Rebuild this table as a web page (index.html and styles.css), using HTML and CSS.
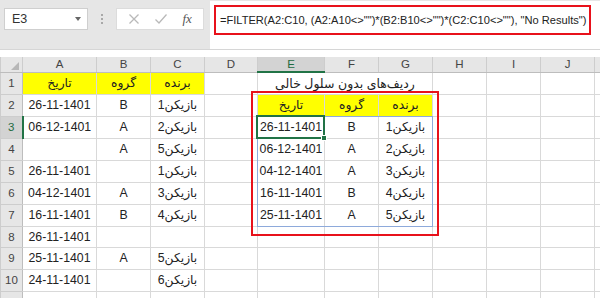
FILE: index.html
```html
<!DOCTYPE html>
<html lang="fa">
<head>
<meta charset="utf-8">
<link rel="stylesheet" href="styles.css">
</head>
<body>
<div class="app">
  <div class="toolbar">
    <div class="namebox"><span class="name">E3</span><span class="caret"></span></div>
    <div class="dots"><i></i><i></i><i></i></div>
    <div class="fbtns">
      <svg class="ic" width="12" height="12" viewBox="0 0 12 12"><path d="M1.5 1.5 L10.5 10.5 M10.5 1.5 L1.5 10.5" stroke="#b9b9b9" stroke-width="1.3" fill="none"/></svg>
      <svg class="ic" width="14" height="12" viewBox="0 0 14 12"><path d="M1.5 6.5 L5 10 L12.5 1.5" stroke="#b9b9b9" stroke-width="1.3" fill="none"/></svg>
      <span class="fx">fx</span>
    </div>
    <div class="formula">
      <div class="fbox">=FILTER(A2:C10, (A2:A10&lt;&gt;"")*(B2:B10&lt;&gt;"")*(C2:C10&lt;&gt;""), "No Results")</div>
    </div>
  </div>
  <div class="gap"></div>
  <div class="sheet">
    <table class="grid">
      <colgroup>
        <col class="w-rn"><col class="w-a"><col class="w-54"><col class="w-54"><col class="w-d"><col class="w-e"><col class="w-54"><col class="w-54"><col class="w-54"><col class="w-54"><col class="w-54"><col class="w-k">
      </colgroup>
      <thead>
        <tr class="hdr">
          <th class="corner"><span class="tri"></span></th>
          <th>A</th><th>B</th><th>C</th><th>D</th><th class="sel">E</th><th>F</th><th>G</th><th>H</th><th>I</th><th>J</th><th></th>
        </tr>
      </thead>
      <tbody>
        <tr><th>1</th><td class="y ar">تاریخ</td><td class="y ar">گروه</td><td class="y ar">برنده</td><td></td><td colspan="3" class="ar title">ردیف‌های بدون سلول خالی</td><td></td><td></td><td></td><td></td></tr>
        <tr><th>2</th><td>26-11-1401</td><td>B</td><td class="ar">بازیکن1</td><td></td><td class="y ar">تاریخ</td><td class="y ar">گروه</td><td class="y ar">برنده</td><td></td><td></td><td></td><td></td></tr>
        <tr><th class="sel">3</th><td>06-12-1401</td><td>A</td><td class="ar">بازیکن2</td><td></td><td>26-11-1401</td><td>B</td><td class="ar">بازیکن1</td><td></td><td></td><td></td><td></td></tr>
        <tr><th>4</th><td></td><td>A</td><td class="ar">بازیکن5</td><td></td><td>06-12-1401</td><td>A</td><td class="ar">بازیکن2</td><td></td><td></td><td></td><td></td></tr>
        <tr><th>5</th><td>26-11-1401</td><td></td><td class="ar">بازیکن1</td><td></td><td>04-12-1401</td><td>A</td><td class="ar">بازیکن3</td><td></td><td></td><td></td><td></td></tr>
        <tr><th>6</th><td>04-12-1401</td><td>A</td><td class="ar">بازیکن3</td><td></td><td>16-11-1401</td><td>B</td><td class="ar">بازیکن4</td><td></td><td></td><td></td><td></td></tr>
        <tr><th>7</th><td>16-11-1401</td><td>B</td><td class="ar">بازیکن4</td><td></td><td>25-11-1401</td><td>A</td><td class="ar">بازیکن5</td><td></td><td></td><td></td><td></td></tr>
        <tr class="r21"><th>8</th><td>26-11-1401</td><td></td><td></td><td></td><td></td><td></td><td></td><td></td><td></td><td></td><td></td></tr>
        <tr><th>9</th><td>25-11-1401</td><td>A</td><td class="ar">بازیکن5</td><td></td><td></td><td></td><td></td><td></td><td></td><td></td><td></td></tr>
        <tr><th>10</th><td>24-11-1401</td><td></td><td class="ar">بازیکن6</td><td></td><td></td><td></td><td></td><td></td><td></td><td></td><td></td></tr>
        <tr><th>11</th><td></td><td></td><td></td><td></td><td></td><td></td><td></td><td></td><td></td><td></td><td></td></tr>
      </tbody>
    </table>
    <div class="spill"></div>
    <div class="cursor"><span class="handle"></span></div>
    <div class="redbox"></div>
  </div>
</div>
</body>
</html>
```
FILE: styles.css
```css
* { box-sizing: border-box; }
html, body { margin: 0; padding: 0; }
body {
  width: 600px;
  height: 298px;
  overflow: hidden;
  background: #ffffff;
  font-family: "Liberation Sans", "DejaVu Sans", sans-serif;
  color: #222;
}
.app { width: 600px; }
.toolbar {
  height: 49px;
  background: #e6e6e6;
  display: flex;
  align-items: flex-start;
  position: relative;
}
.namebox {
  flex: 0 0 84px;
  margin: 8px 0 0 4px;
  height: 22px;
  background: #fff;
  border: 1px solid #cfcfcf;
  display: flex;
  align-items: center;
  justify-content: space-between;
  padding: 0 6px 0 7px;
  font-size: 12.5px;
  color: #333;
}
.caret {
  width: 0; height: 0;
  border-left: 3.5px solid transparent;
  border-right: 3.5px solid transparent;
  border-top: 4px solid #666;
}
.dots {
  flex: 0 0 28px;
  display: flex;
  flex-direction: column;
  align-items: center;
  gap: 2px;
  margin-top: 14px;
}
.dots i { width: 2px; height: 2px; background: #a8a8a8; display: block; }
.fbtns {
  flex: 0 0 88px;
  margin-top: 8px;
  height: 22px;
  background: #fff;
  border: 1px solid #dcdcdc;
  display: flex;
  align-items: center;
  justify-content: space-around;
  padding: 0 4px;
}
.fx {
  font-family: "Liberation Serif", serif;
  font-style: italic;
  font-size: 13px;
  color: #555;
}
.formula {
  margin-left: 6px;
  flex: 1 1 auto;
  min-width: 0;
  height: 48px;
  margin-top: 1px;
  background: #fff;
  padding: 4px 9px 0 4px;
}
.fbox {
  height: 30px;
  border: 2px solid #e8111b;
  display: flex;
  align-items: center;
  padding-left: 4px;
  font-size: 11.1px;
  color: #222;
  white-space: nowrap;
  overflow: hidden;
}
.gap { height: 8px; background: #ffffff; border-top: 1px solid #d6d6d6; }
.sheet { position: relative; }
.grid {
  border-collapse: collapse;
  table-layout: fixed;
  width: 624px;
}
.w-rn { width: 22px; }
.w-a { width: 74px; }
.w-54 { width: 54px; }
.w-d { width: 53px; }
.w-e { width: 67px; }
.w-k { width: 30px; }
.grid td, .grid th {
  padding: 0;
  border: 1px solid #d9d9d9;
  height: 22px;
  text-align: center;
  font-size: 12.3px;
  font-weight: normal;
  white-space: nowrap;
  overflow: hidden;
  color: #222;
}
.grid tr.r21 td, .grid tr.r21 th { height: 21px; }
.grid tbody th {
  background: #e6e6e6;
  color: #444;
  font-size: 11.5px;
  border-color: #cdcdcd;
  border-right-color: #bdbdbd;
}
.grid thead th {
  height: 15px;
  background: #e6e6e6;
  color: #444;
  font-size: 11.5px;
  border-color: #cdcdcd;
  border-bottom-color: #bdbdbd;
  border-top: none;
  line-height: 13px;
}
.grid th.corner { position: relative; }
.tri {
  position: absolute;
  right: 3px; bottom: 2px;
  width: 0; height: 0;
  border-left: 8px solid transparent;
  border-bottom: 8px solid #b7b7b7;
}
.grid thead th.sel {
  background: #d3d3d3;
  color: #1e6b41;
  border-bottom: 2px solid #217346;
}
.grid tbody th.sel {
  background: #d3d3d3;
  color: #1e6b41;
  border-right: 2px solid #217346;
}
.grid td.y { background: #ffff00; }
.ar {
  direction: rtl;
  font-family: "DejaVu Sans", sans-serif;
  font-size: 12px;
}
.grid td.ar { font-family: "Liberation Sans", "DejaVu Sans", sans-serif; }
.grid td.title { font-size: 12.5px; }
.spill {
  position: absolute;
  left: 257px; top: 59px;
  width: 176px; height: 111px;
  border: 1px solid #8eaadb;
  pointer-events: none;
}
.cursor {
  position: absolute;
  left: 256px; top: 58px;
  width: 69px; height: 24px;
  border: 2px solid #217346;
}
.handle {
  position: absolute;
  right: -4px; bottom: -4px;
  width: 6px; height: 6px;
  background: #217346;
  border: 1px solid #fff;
}
.redbox {
  position: absolute;
  left: 251px; top: 34px;
  width: 188px; height: 145px;
  border: 2px solid #e8111b;
}
```
